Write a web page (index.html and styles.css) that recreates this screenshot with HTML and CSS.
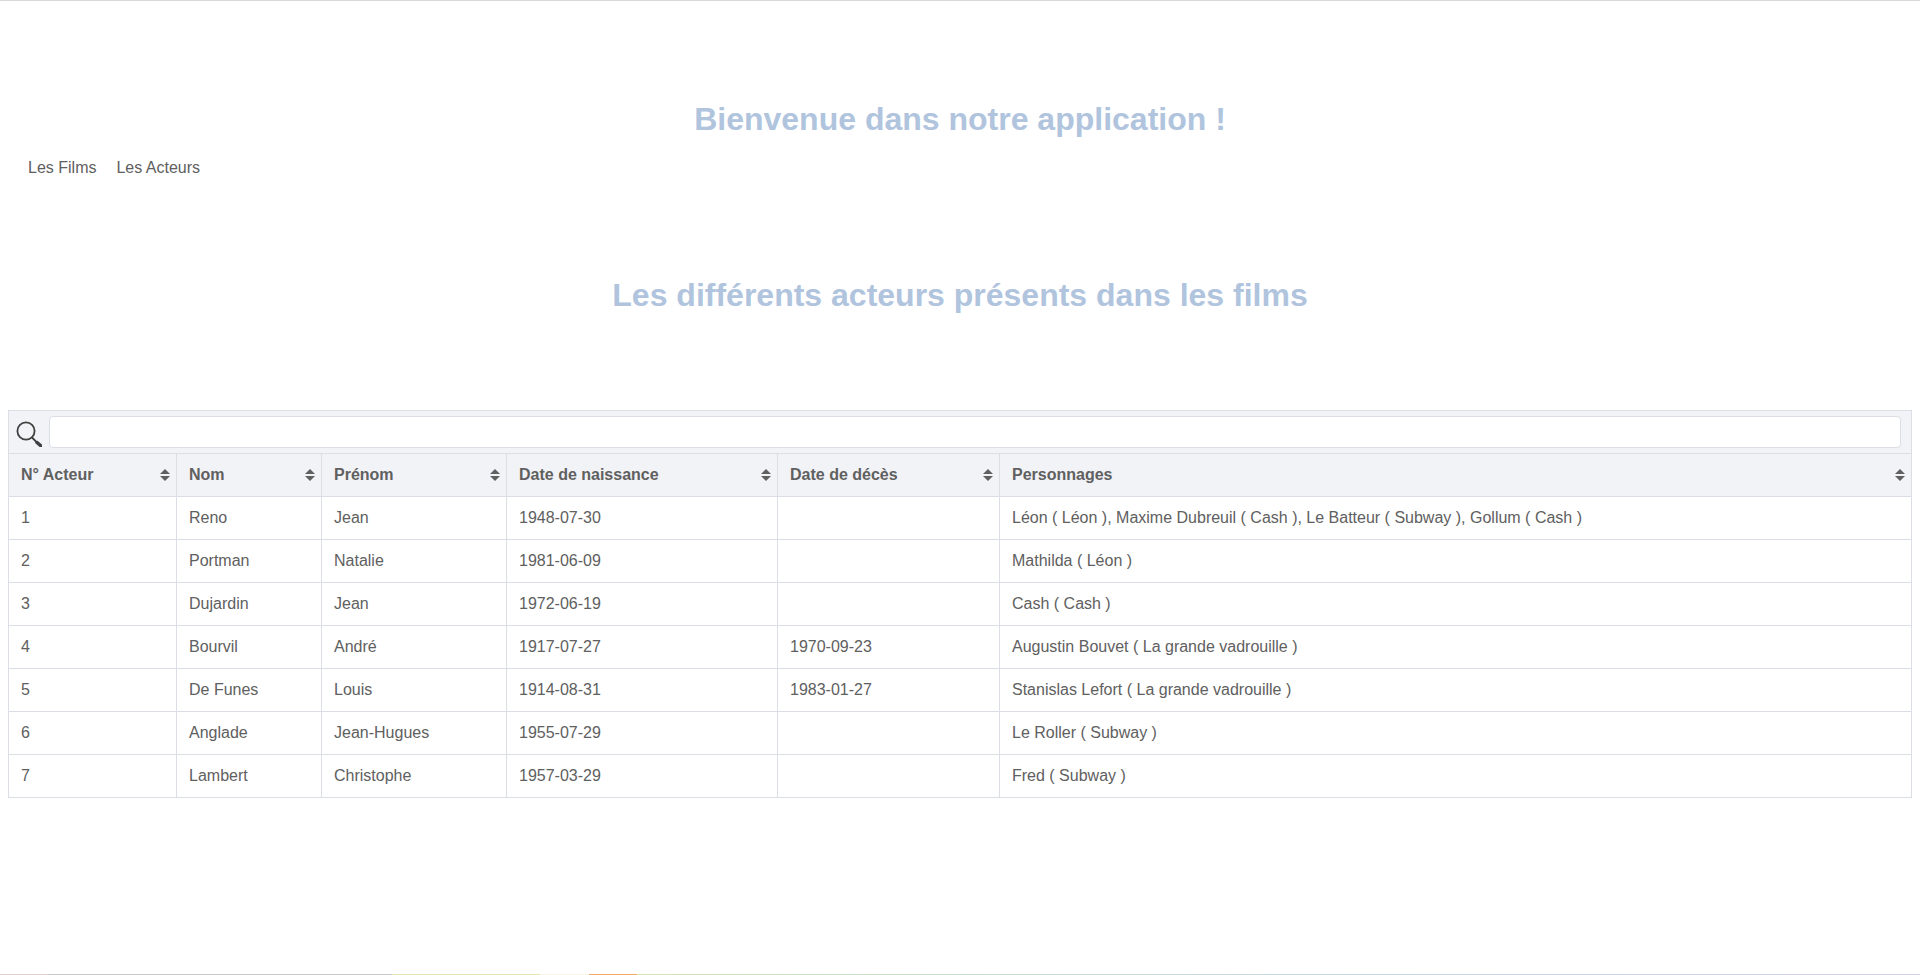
FILE: index.html
```html
<!DOCTYPE html>
<html lang="fr">
<head>
<meta charset="UTF-8">
<meta name="viewport" content="width=device-width, initial-scale=1.0">
<title>Les Acteurs</title>
<link rel="stylesheet" href="styles.css">
</head>
<body>
  <h1 class="page-title">Bienvenue dans notre application !</h1>
  <nav class="main-nav">
    <a href="#">Les Films</a>
    <a href="#">Les Acteurs</a>
  </nav>
  <h2 class="page-title section-title">Les différents acteurs présents dans les films</h2>

  <div class="grid">
    <div class="search-bar">
      <svg class="search-icon" viewBox="0 0 26 26" width="26" height="26">
        <circle cx="10" cy="10" r="8.6" fill="none" stroke="#404040" stroke-width="1.8"/>
        <path d="M16 16.5l5 5" stroke="#404040" stroke-width="1.8"/>
        <path d="M21 21.5l4 3.5" stroke="#404040" stroke-width="3.4" stroke-linecap="round"/>
      </svg>
      <input type="text" class="search-input">
    </div>
    <table class="actors">
      <colgroup>
        <col class="col-id">
        <col class="col-name">
        <col class="col-first">
        <col class="col-birth">
        <col class="col-death">
        <col>
      </colgroup>
      <thead>
        <tr>
          <th>N° Acteur<span class="sort"></span></th>
          <th>Nom<span class="sort"></span></th>
          <th>Prénom<span class="sort"></span></th>
          <th>Date de naissance<span class="sort"></span></th>
          <th>Date de décès<span class="sort"></span></th>
          <th>Personnages<span class="sort"></span></th>
        </tr>
      </thead>
      <tbody>
        <tr><td>1</td><td>Reno</td><td>Jean</td><td>1948-07-30</td><td></td><td>Léon ( Léon ), Maxime Dubreuil ( Cash ), Le Batteur ( Subway ), Gollum ( Cash )</td></tr>
        <tr><td>2</td><td>Portman</td><td>Natalie</td><td>1981-06-09</td><td></td><td>Mathilda ( Léon )</td></tr>
        <tr><td>3</td><td>Dujardin</td><td>Jean</td><td>1972-06-19</td><td></td><td>Cash ( Cash )</td></tr>
        <tr><td>4</td><td>Bourvil</td><td>André</td><td>1917-07-27</td><td>1970-09-23</td><td>Augustin Bouvet ( La grande vadrouille )</td></tr>
        <tr><td>5</td><td>De Funes</td><td>Louis</td><td>1914-08-31</td><td>1983-01-27</td><td>Stanislas Lefort ( La grande vadrouille )</td></tr>
        <tr><td>6</td><td>Anglade</td><td>Jean-Hugues</td><td>1955-07-29</td><td></td><td>Le Roller ( Subway )</td></tr>
        <tr><td>7</td><td>Lambert</td><td>Christophe</td><td>1957-03-29</td><td></td><td>Fred ( Subway )</td></tr>
      </tbody>
    </table>
  </div>
</body>
</html>
```

FILE: styles.css
```css
html {
  height: 100%;
}

body {
  margin: 0;
  padding: 0 8px;
  min-height: 100%;
  box-sizing: border-box;
  border-top: 1px solid #d8d8d8;
  font-family: "Liberation Sans", Arial, sans-serif;
  font-size: 16px;
  color: #606060;
  background-color: #fff;
  /* thin coloured strip along the bottom edge */
  background-image: linear-gradient(to right,
    #e8cfcf 0, #e8cfcf 2.5%,
    #c8c8c8 2.5%, #c8c8c8 20.4%,
    #e3e6a8 20.4%, #e3e6a8 28.1%,
    #f6f6e2 28.1%, #f6f6e2 30.7%,
    #f0a868 30.7%, #f0a868 33.2%,
    #d8e4b0 33.2%, #c4e2d0 50%, #c8d8e0 70%, #d4d0e4 100%);
  background-size: 100% 1px;
  background-position: left bottom;
  background-repeat: no-repeat;
}

.page-title {
  margin: 0;
  padding-top: 100px;
  text-align: center;
  font-size: 32px;
  line-height: 37px;
  font-weight: bold;
  color: #b0c4de;
}

.section-title {
  padding-top: 85px;
}

.main-nav {
  display: flex;
  gap: 20px;
  padding: 18px 20px 12px;
  line-height: 24px;
}

.main-nav a {
  color: #606060;
  text-decoration: none;
}

.grid {
  margin-top: 96px;
}

.search-bar {
  display: flex;
  align-items: center;
  height: 43px;
  box-sizing: border-box;
  padding: 5px 10px 5px 7px;
  gap: 7px;
  background-color: #f2f3f7;
  border: 1px solid #dcdee6;
  border-bottom: none;
}

.search-icon {
  flex: none;
  margin-top: 4px;
}

.search-input {
  flex: 1;
  height: 32px;
  box-sizing: border-box;
  border: 1px solid #dcdee6;
  border-radius: 4px;
  background-color: #fff;
}

.actors {
  width: 100%;
  table-layout: fixed;
  border-collapse: collapse;
}

.col-id { width: 168px; }
.col-name { width: 145px; }
.col-first { width: 185px; }
.col-birth { width: 271px; }
.col-death { width: 222px; }

.actors th,
.actors td {
  height: 43px;
  box-sizing: border-box;
  padding: 0 12px;
  border: 1px solid #dcdee6;
  text-align: left;
}

.actors th {
  position: relative;
  background-color: #f2f3f7;
  font-weight: bold;
}

/* sort arrows */
.sort {
  position: absolute;
  right: 6px;
  top: 50%;
  margin-top: -6px;
  width: 10px;
  height: 12px;
}

.sort::before,
.sort::after {
  content: "";
  position: absolute;
  left: 0;
  border-left: 5px solid transparent;
  border-right: 5px solid transparent;
}

.sort::before {
  top: 0;
  border-bottom: 5px solid #606060;
}

.sort::after {
  bottom: 0;
  border-top: 5px solid #606060;
}
```
